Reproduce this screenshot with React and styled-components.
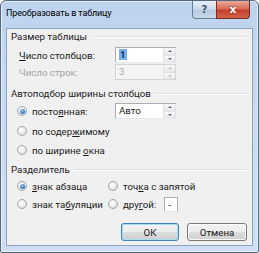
import styled, { createGlobalStyle, css } from "styled-components"

const Global = createGlobalStyle`
html, body {
  margin: 0;
  padding: 0;
  background: #ffffff;
}
body {
  font-family: Roboto, "Noto Sans", sans-serif;
  font-size: 9.7px;
  color: #1a1a1a;
}
`

const Window = styled.div`
width: 259px;
height: 253px;
box-sizing: border-box;
display: flex;
flex-direction: column;
border: 1px solid #54687f;
border-radius: 6px 6px 2px 2px;
background: linear-gradient(180deg, #bcd3ee 0%, #c6d9f1 30%, #cfdff3 100%);
box-shadow: inset 0 0 0 1px #e7eff9;
overflow: hidden;
`

const TitleBar = styled.div`
height: 27px;
flex: none;
display: flex;
align-items: flex-start;
justify-content: space-between;
padding: 0 8px 0 5px;
`

const Title = styled.div`
font-size: 9px;
letter-spacing: -0.15px;
line-height: 22px;
color: #000;
padding-top: 1px;
`

const Captions = styled.div`
display: flex;
`

const CaptionButton = styled.div`
height: 18px;
box-sizing: border-box;
display: flex;
align-items: center;
justify-content: center;
font-family: "DejaVu Sans", sans-serif;
font-weight: bold;
border: 1px solid #6d7f97;
border-top: none;
${p => p.close ? css`
  width: 34px;
  border-radius: 0 0 4px 0;
  border-color: #7b2c22;
  background: linear-gradient(180deg, #e9a99b 0%, #d86d5b 45%, #c5402b 55%, #d3644c 100%);
  color: #fff;
  font-size: 11px;
  text-shadow: 0 0 2px #5a1a10;
` : css`
  width: 24px;
  border-right: none;
  border-radius: 0 0 0 4px;
  background: linear-gradient(180deg, #e6eef8 0%, #cfdcec 45%, #b8cbe2 55%, #c9d8ea 100%);
  color: #3f536e;
  font-size: 10px;
`}
`

const Client = styled.div`
flex: 1;
margin: 0 5px 6px 5px;
border: 1px solid #8ea3bd;
background: #f0f0f0;
padding: 0 5px 0 4px;
display: flex;
flex-direction: column;
`

const GroupHeader = styled.div`
display: flex;
align-items: center;
gap: 4px;
height: 14px;
margin-top: ${p => p.top}px;
`

const GroupTitle = styled.span`
white-space: nowrap;
color: #1c1c1c;
`

const GroupLine = styled.div`
flex: 1;
height: 1px;
background: #dcdfe3;
box-shadow: 0 1px 0 #ffffff;
`

const Row = styled.div`
display: flex;
align-items: center;
height: 16px;
margin-top: ${p => p.top}px;
padding-left: ${p => p.indent || 0}px;
`

const Label = styled.span`
width: ${p => p.w}px;
flex: none;
white-space: nowrap;
color: ${p => p.disabled ? "#a3a3a3" : "#1a1a1a"};
`

const Key = styled.span`
text-decoration: underline;
text-underline-offset: 1px;
`

const SpinField = styled.div`
width: 61px;
height: 16px;
box-sizing: border-box;
display: flex;
border: 1px solid ${p => p.disabled ? "#d3d3d3" : "#abadb3"};
border-right-color: ${p => p.disabled ? "#d3d3d3" : "#dbdfe6"};
border-bottom-color: ${p => p.disabled ? "#d3d3d3" : "#e3e9ef"};
background: ${p => p.disabled ? "#f4f4f4" : "#ffffff"};
`

const SpinText = styled.div`
flex: 1;
padding-left: 3px;
line-height: 14px;
color: ${p => p.disabled ? "#a8a8a8" : "#1a1a1a"};
`

const Selected = styled.span`
background: #7aaee9;
color: #10306e;
font-weight: bold;
padding: 0 1px;
`

const Spinner = styled.div`
width: 11px;
display: flex;
flex-direction: column;
border-left: 1px solid #e2e2e2;
`

const SpinArrow = styled.div`
flex: 1;
display: flex;
align-items: center;
justify-content: center;
background: linear-gradient(180deg, #f8f8f8, #e8e8e8);
&:first-child {
  border-bottom: 1px solid #e0e0e0;
}
&::after {
  content: "";
  border-left: 2px solid transparent;
  border-right: 2px solid transparent;
  ${p => p.down
    ? css`border-top: 2px solid ${p.disabled ? "#c4c4c4" : "#5f6b7a"};`
    : css`border-bottom: 2px solid ${p.disabled ? "#c4c4c4" : "#5f6b7a"};`}
}
`

const Radio = styled.span`
width: 10px;
height: 10px;
flex: none;
box-sizing: border-box;
border-radius: 50%;
border: 1px solid #a3a6ab;
background: radial-gradient(circle at 40% 35%, #ffffff 0%, #e9e9e9 55%, #cfd1d4 100%);
margin-right: 5px;
display: flex;
align-items: center;
justify-content: center;
${p => p.checked && css`
  &::after {
    content: "";
    width: 5px;
    height: 5px;
    border-radius: 50%;
    background: radial-gradient(circle at 40% 35%, #9fd2ff 0%, #2e78c6 60%, #17528f 100%);
  }
`}
`

const Option = styled.label`
display: flex;
align-items: center;
width: ${p => p.w ? p.w + "px" : "auto"};
flex: none;
white-space: nowrap;
`

const OptionText = styled.span`
white-space: pre;
`

const SmallField = styled.div`
width: 14px;
height: 15px;
box-sizing: border-box;
border: 1px solid #abadb3;
border-bottom-color: #e3e9ef;
background: #fff;
line-height: 13px;
padding-left: 3px;
margin-left: 8px;
`

const Buttons = styled.div`
display: flex;
justify-content: flex-end;
gap: 8px;
margin-top: 11px;
`

const Button = styled.div`
width: ${p => p.w}px;
height: 18px;
box-sizing: border-box;
display: flex;
align-items: center;
justify-content: center;
border-radius: 3px;
border: 1px solid ${p => p.primary ? "#3d84b9" : "#7a7a7a"};
background: linear-gradient(180deg, #f4f4f4 0%, #ebebeb 48%, #dddddd 52%, #cfcfcf 100%);
box-shadow: inset 0 0 0 1px ${p => p.primary ? "#a8dcf3" : "#fbfbfb"};
color: #1a1a1a;
`

const Spin = ({ value, disabled }) => (
  <SpinField disabled={disabled}>
    <SpinText disabled={disabled}>{value}</SpinText>
    <Spinner>
      <SpinArrow disabled={disabled} />
      <SpinArrow down disabled={disabled} />
    </Spinner>
  </SpinField>
)

export default function App() {
  return (
    <>
      <Global />
      <Window>
        <TitleBar>
          <Title>Преобразовать в таблицу</Title>
          <Captions>
            <CaptionButton>?</CaptionButton>
            <CaptionButton close>x</CaptionButton>
          </Captions>
        </TitleBar>
        <Client>
          <GroupHeader top={0}>
            <GroupTitle>Размер таблицы</GroupTitle>
            <GroupLine />
          </GroupHeader>
          <Row top={4} indent={8}>
            <Label w={96}><Key>Ч</Key>исло столбцов:</Label>
            <Spin value={<Selected>1</Selected>} />
          </Row>
          <Row top={1} indent={8}>
            <Label w={96} disabled>Число строк:</Label>
            <Spin value="3" disabled />
          </Row>

          <GroupHeader top={6}>
            <GroupTitle>Автоподбор ширины столбцов</GroupTitle>
            <GroupLine />
          </GroupHeader>
          <Row top={3} indent={6}>
            <Option w={98}><Radio checked /><OptionText>посто<Key>я</Key>нная:</OptionText></Option>
            <Spin value="Авто" />
          </Row>
          <Row top={4} indent={6}>
            <Option><Radio /><OptionText>по содер<Key>ж</Key>имому</OptionText></Option>
          </Row>
          <Row top={3} indent={6}>
            <Option><Radio /><OptionText>по ширине <Key>о</Key>кна</OptionText></Option>
          </Row>

          <GroupHeader top={4}>
            <GroupTitle>Разделитель</GroupTitle>
            <GroupLine />
          </GroupHeader>
          <Row top={2} indent={6}>
            <Option w={91}><Radio checked /><OptionText><Key>з</Key>нак абзаца</OptionText></Option>
            <Option><Radio /><OptionText>точ<Key>к</Key>а с запятой</OptionText></Option>
          </Row>
          <Row top={2} indent={6}>
            <Option w={91}><Radio /><OptionText>знак та<Key>б</Key>уляции</OptionText></Option>
            <Option><Radio /><OptionText>дру<Key>г</Key>ой:</OptionText></Option>
            <SmallField>-</SmallField>
          </Row>

          <Buttons>
            <Button primary w={58}>ОК</Button>
            <Button w={60}>Отмена</Button>
          </Buttons>
        </Client>
      </Window>
    </>
  )
}
